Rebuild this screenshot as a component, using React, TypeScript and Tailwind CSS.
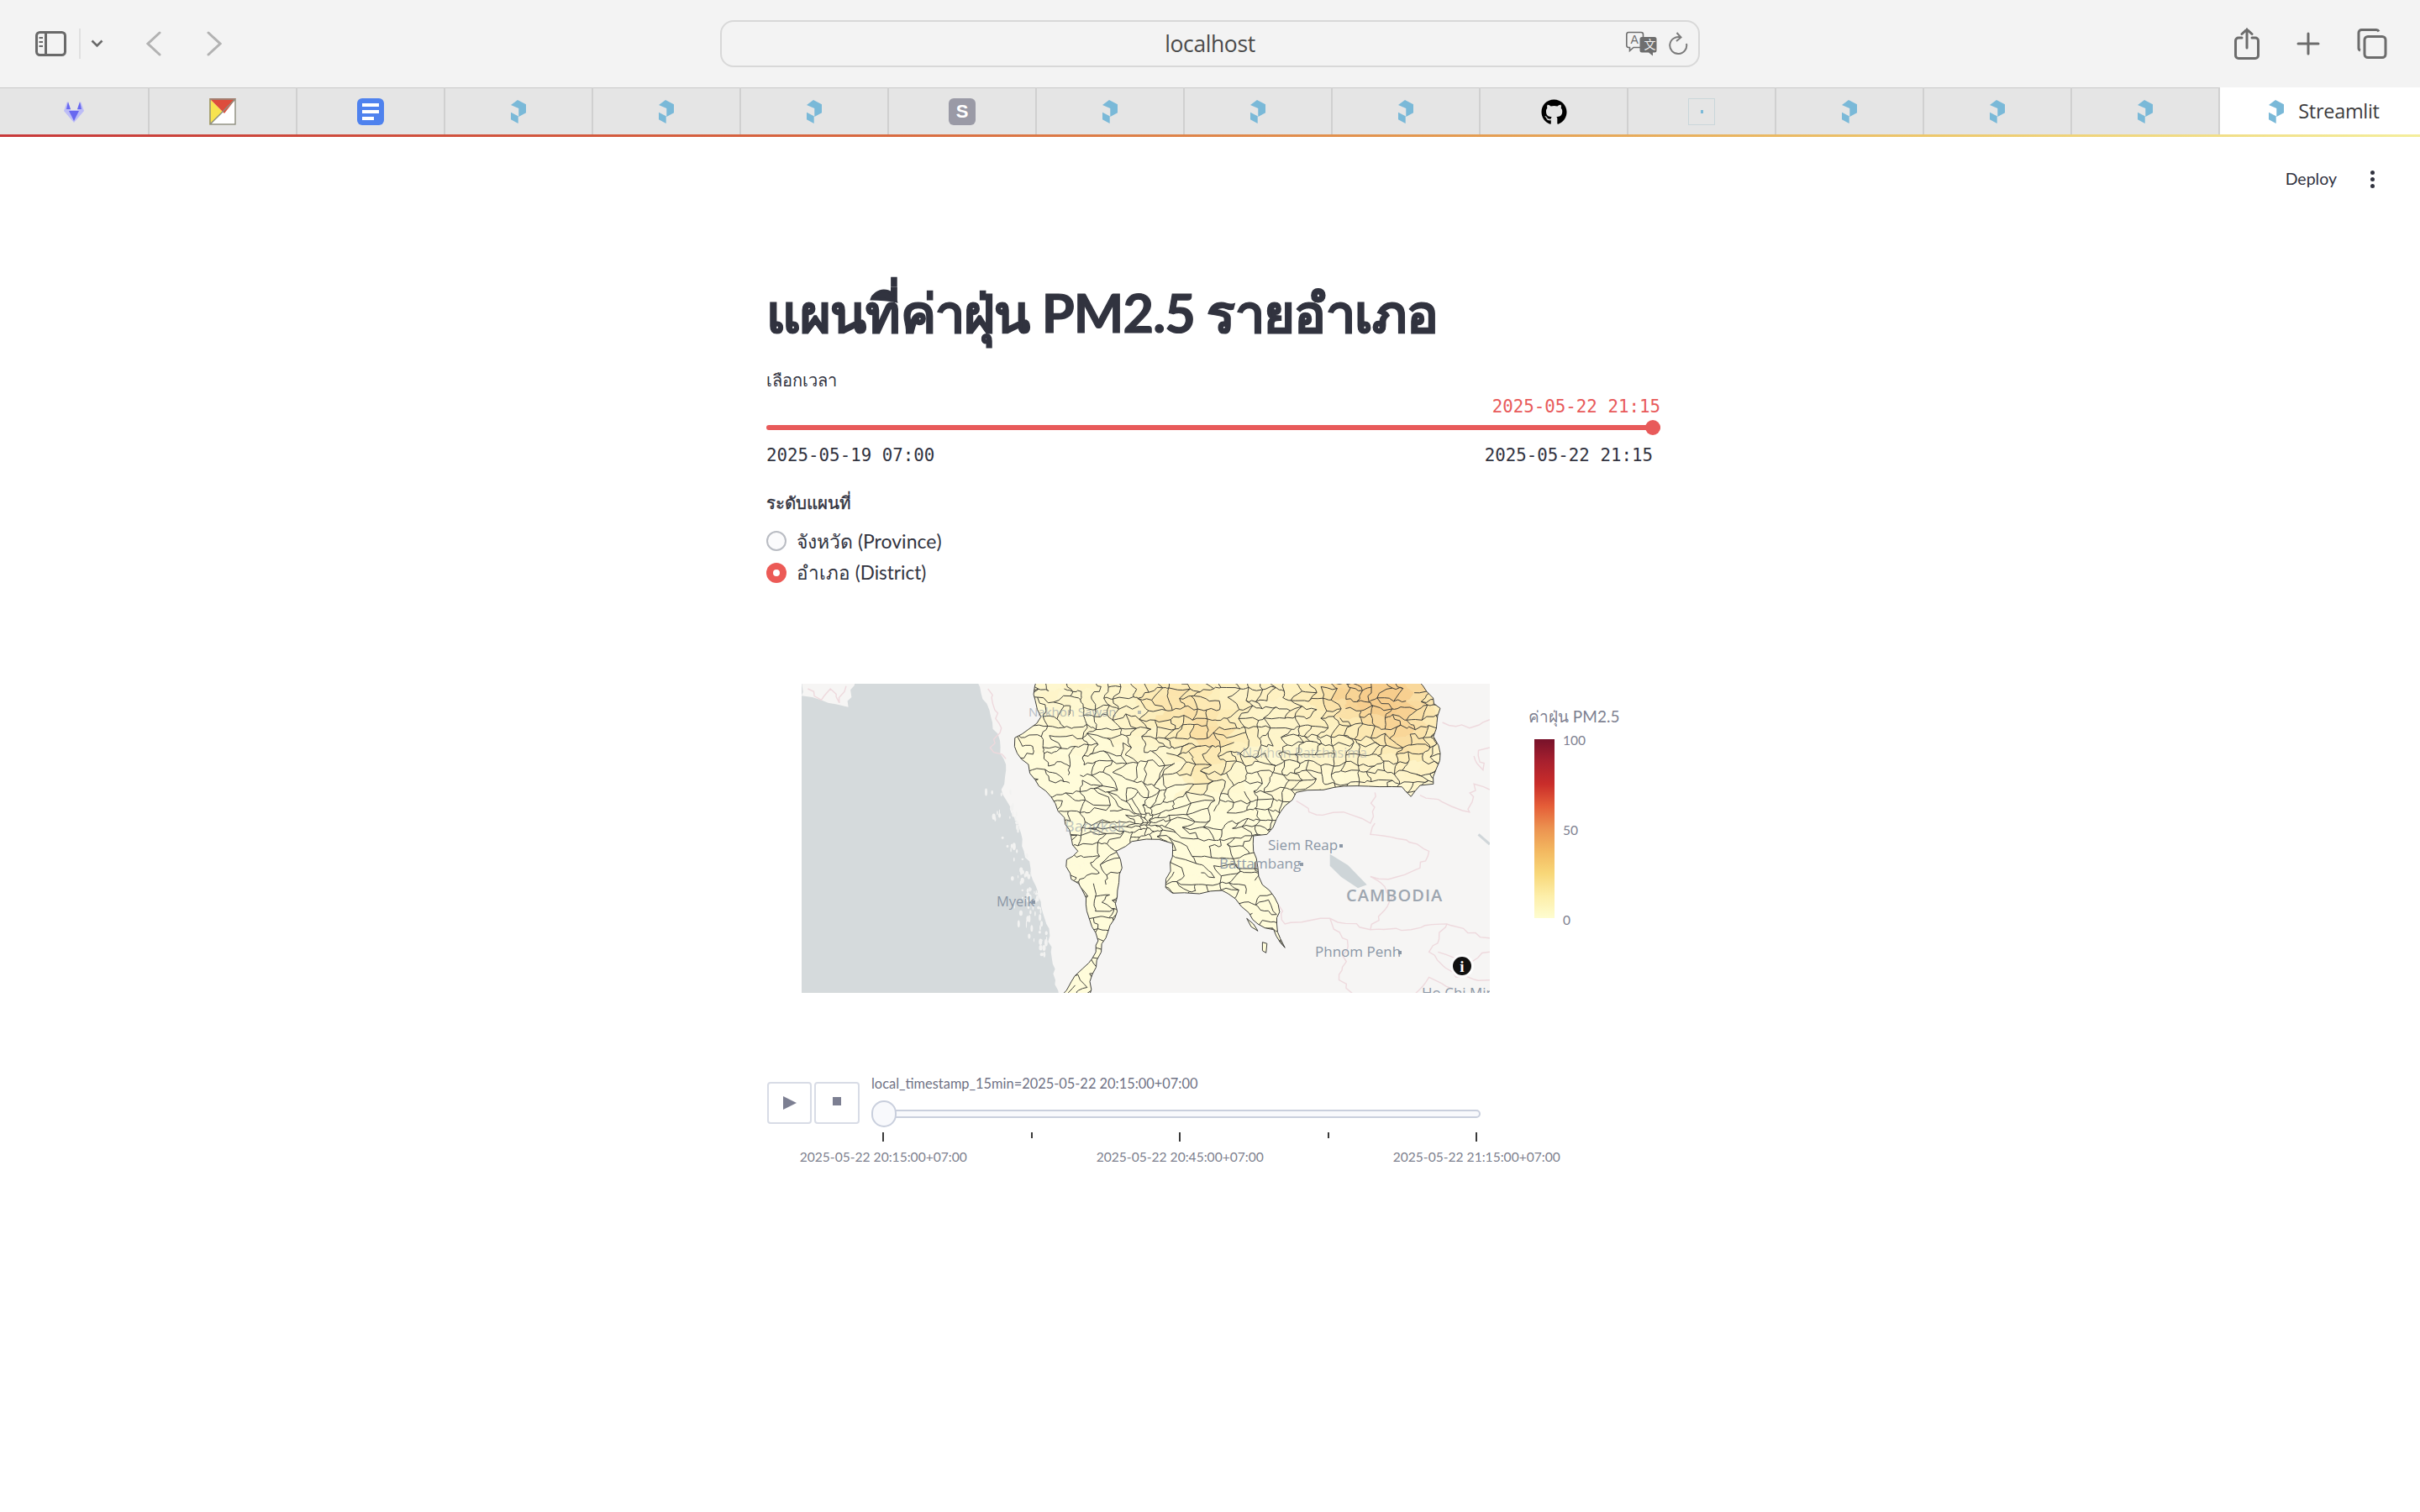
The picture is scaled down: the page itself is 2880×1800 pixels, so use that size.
import { FaGithub } from 'react-icons/fa';

// points traced off the map crop, kept in crop units (x/1.867, y/3 gets map pixels)
type Pt = [number, number];
const toMap = ([x, y]: Pt): Pt => [x / 1.867 - 14, y / 3 - 14];
const str = (list: Pt[]) => list.map(([x, y]) => `${x.toFixed(1)},${y.toFixed(1)}`).join(' ');
const pts = (list: Pt[]) => str(list.map(toMap));

function seeded(seed: number) {
  let s = seed;
  return () => {
    s = (s * 16807) % 2147483647;
    return s / 2147483647;
  };
}

const lerp = (a: number, b: number, t: number) => a + (b - a) * t;

// breaks long segments up so borders look hand-surveyed rather than straight
function wiggle(list: Pt[], seed: number, step: number, amp: number, closed = false): Pt[] {
  const rnd = seeded(seed);
  const out: Pt[] = [];
  const count = closed ? list.length : list.length - 1;
  for (let i = 0; i < count; i++) {
    const a = list[i];
    const b = list[(i + 1) % list.length];
    const n = Math.max(1, Math.round(Math.hypot(a[0] - b[0], a[1] - b[1]) / step));
    for (let k = 0; k < n; k++) {
      const t = k / n;
      const m = k === 0 ? 0 : amp;
      out.push([lerp(a[0], b[0], t) + (rnd() - 0.5) * m, lerp(a[1], b[1], t) + (rnd() - 0.5) * m]);
    }
  }
  if (!closed) out.push(list[list.length - 1]);
  return out;
}

const THAILAND: Pt[] = wiggle(
  [
    [548, 30], [545, 100], [558, 160], [530, 205], [500, 235], [505, 290], [530, 330], [545, 385], [590, 470],
    [610, 520], [625, 590], [640, 640], [615, 670], [625, 740], [650, 780], [665, 880], [685, 960], [680, 1000],
    [650, 1060], [600, 1160], [665, 1160], [672, 1080], [692, 1000], [702, 950], [722, 880], [728, 780], [738, 700],
    [725, 640], [760, 605], [820, 598], [850, 612], [845, 680], [835, 770], [850, 790], [910, 792], [960, 780],
    [990, 810], [1020, 860], [1040, 900], [1075, 920], [1100, 985], [1082, 900], [1085, 830], [1050, 760], [1040, 700],
    [1030, 640], [1030, 585], [1060, 580], [1090, 500], [1125, 430], [1210, 412], [1360, 410], [1380, 445], [1400, 405],
    [1430, 400], [1445, 290], [1430, 230], [1445, 130], [1415, 70], [1395, 30],
  ],
  77,
  26,
  9,
  true,
);
const LAND_EAST: Pt[] = wiggle(
  [
    [415, 30], [450, 180], [480, 330], [470, 420], [510, 560], [520, 640], [550, 780], [570, 900], [580, 1000],
    [590, 1100], [598, 1160], [1130, 1160], [1120, 1060], [1100, 985], [1040, 900], [990, 810], [960, 780], [850, 790],
    [835, 770], [850, 612], [760, 605], [725, 640], [738, 700], [728, 780], [722, 880], [692, 1000], [672, 1080], [665, 1160],
    [1130, 1160], [1570, 1160], [1570, 30],
  ],
  91,
  22,
  8,
  true,
);
const BORDERS: Pt[][] = [
  [[1125, 460], [1170, 510], [1230, 500], [1290, 540], [1300, 430]],
  [[1300, 540], [1290, 580], [1370, 600], [1420, 640], [1400, 700], [1330, 740], [1290, 730]],
  [[1400, 440], [1470, 480], [1510, 500], [1520, 400], [1555, 420]],
  [[1085, 830], [1100, 900], [1200, 880], [1290, 920], [1380, 920], [1460, 900], [1555, 950]],
  [[1440, 1000], [1500, 1040], [1555, 1000]],
  [[1450, 180], [1510, 200], [1555, 170]],
  [[1520, 300], [1540, 350], [1530, 280], [1555, 270]],
  [[440, 60], [470, 200], [445, 270], [480, 310]],
  [[40, 60], [70, 100], [90, 60], [110, 110], [125, 50]],
  [[1390, 1148], [1420, 1090], [1470, 1130]],
  [[1200, 880], [1240, 980], [1220, 1100], [1250, 1148]],
  [[1290, 730], [1340, 800], [1290, 920]],
  [[1460, 900], [1420, 1000], [1480, 1090], [1555, 1100]],
];

// the little white specks of the Myeik archipelago, off the west coast
function buildSpecks() {
  const rnd = seeded(1907);
  const specks: { x: number; y: number; w: number; h: number }[] = [];
  for (let i = 0; i < 90; i++) {
    const y = 420 + rnd() * 600;
    const coast = 490 + ((y - 420) / 600) * 95;
    const [mx, my] = toMap([coast - rnd() * rnd() * 70, y]);
    specks.push({ x: mx, y: my, w: 0.5 + rnd() * 1.6, h: 1 + rnd() * 3.5 });
  }
  return specks;
}
const SPECKS = buildSpecks();

function heat(t: number) {
  const low = [255, 252, 218];
  const mid = [253, 236, 182];
  const high = [247, 205, 140];
  const [a, b, k] = t < 0.5 ? [low, mid, t * 2] : [mid, high, (t - 0.5) * 2];
  return `rgb(${(a as number[]).map((v, i) => Math.round(lerp(v, (b as number[])[i], k as number))).join(',')})`;
}

// where the dust is worst: [x, y, radius, strength] in map pixels
const HOTSPOTS = [
  [698, 18, 45, 0.7],
  [640, 10, 35, 0.35],
  [490, 63, 36, 0.5],
  [440, 25, 40, 0.4],
  [473, 109, 22, 0.35],
  [720, 70, 30, 0.3],
];

function dust(x: number, y: number) {
  let t = ((x - 290) / 430) * 0.22 + ((90 - y) / 110) * 0.24;
  for (const [hx, hy, r, k] of HOTSPOTS) {
    const d = Math.hypot(x - hx, y - hy) / r;
    t += k * Math.exp(-d * d);
  }
  return t;
}

// fake district mesh, squeezed towards Bangkok; some edges are dropped so cells merge unevenly
function buildDistricts() {
  const rnd = seeded(4211);
  const bkk: Pt = [412, 168];
  const cw = 15;
  const ch = 11;
  const cols = 62;
  const rows = 46;
  const grid: Pt[][] = [];
  for (let i = 0; i <= cols; i++) {
    grid[i] = [];
    for (let j = 0; j <= rows; j++) {
      const x = -60 + i * cw + (rnd() - 0.5) * cw * 0.75 + (j % 2) * (cw / 2);
      const y = -70 + j * ch + (rnd() - 0.5) * ch * 0.75;
      const dx = x - bkk[0];
      const dy = y - bkk[1];
      const d = Math.hypot(dx, dy) || 1;
      const f = Math.min(1, 0.2 + Math.pow(d / 90, 1.2));
      grid[i][j] = [bkk[0] + dx * f, bkk[1] + dy * f];
    }
  }
  const wob = (a: Pt, b: Pt): Pt[] => {
    const size = Math.hypot(a[0] - b[0], a[1] - b[1]) * 0.28;
    return [
      [lerp(a[0], b[0], 0.35) + (rnd() - 0.5) * size, lerp(a[1], b[1], 0.35) + (rnd() - 0.5) * size],
      [lerp(a[0], b[0], 0.7) + (rnd() - 0.5) * size, lerp(a[1], b[1], 0.7) + (rnd() - 0.5) * size],
    ];
  };
  // west and south have bigger districts than the north-east
  const dropRate = (p: Pt) => (p[0] < 330 || p[1] > 190 ? 0.42 : 0.2);
  const hEdge: Pt[][][] = [];
  const vEdge: Pt[][][] = [];
  const lines: string[] = [];
  for (let i = 0; i <= cols; i++) {
    hEdge[i] = [];
    vEdge[i] = [];
    for (let j = 0; j <= rows; j++) {
      if (i < cols) {
        hEdge[i][j] = wob(grid[i][j], grid[i + 1][j]);
        if (rnd() > dropRate(grid[i][j])) lines.push(str([grid[i][j], ...hEdge[i][j], grid[i + 1][j]]));
      }
      if (j < rows) {
        vEdge[i][j] = wob(grid[i][j], grid[i][j + 1]);
        if (rnd() > dropRate(grid[i][j])) lines.push(str([grid[i][j], ...vEdge[i][j], grid[i][j + 1]]));
      }
    }
  }
  const cells: { points: string; fill: string }[] = [];
  for (let i = 0; i < cols; i++) {
    for (let j = 0; j < rows; j++) {
      const poly: Pt[] = [
        grid[i][j], ...hEdge[i][j],
        grid[i + 1][j], ...vEdge[i + 1][j],
        grid[i + 1][j + 1], ...[...hEdge[i][j + 1]].reverse(),
        grid[i][j + 1], ...[...vEdge[i][j]].reverse(),
      ];
      const cx = (grid[i][j][0] + grid[i + 1][j + 1][0]) / 2;
      const cy = (grid[i][j][1] + grid[i + 1][j + 1][1]) / 2;
      const t = dust(cx, cy) + (rnd() - 0.5) * 0.12;
      cells.push({ points: str(poly), fill: heat(Math.max(0, Math.min(1, t))) });
    }
  }
  return { cells, lines };
}
const DISTRICTS = buildDistricts();

const MAP_LABELS = [
  { text: 'Nakhon Sawan', x: 270, y: 39, size: 15, op: 0.6, dot: 130 },
  { text: 'Nakhon Ratchasima', x: 524, y: 88, size: 16, op: 0.45, dot: -6 },
  { text: 'Bangkok', x: 313, y: 176, size: 18, op: 0.55, dot: 0 },
  { text: 'Siem Reap', x: 555, y: 198, size: 17, op: 1, dot: 85 },
  { text: 'Battambang', x: 497, y: 220, size: 17, op: 0.95, dot: 96 },
  { text: 'Myeik', x: 232, y: 265, size: 16.500, op: 1, dot: 42 },
  { text: 'Phnom Penh', x: 611, y: 325, size: 17, op: 1, dot: 99 },
  { text: 'Ho Chi Minh', x: 738, y: 374, size: 17, op: 1, dot: 0 },
];

function ThaiMap() {
  return (
    <svg width="819" height="368" viewBox="0 0 819 368" className="block bg-[#d5dadc]">
      <defs>
        <clipPath id="thailand">
          <polygon points={pts(THAILAND)} />
        </clipPath>
      </defs>
      <polygon points={pts(LAND_EAST)} fill="#f6f5f4" />
      <polygon points={pts(wiggle([[26, 30], [145, 30], [130, 125], [85, 110], [26, 85]], 12, 20, 10, true))} fill="#f6f5f4" />
      {SPECKS.map((s, i) => (
        <ellipse key={i} cx={s.x} cy={s.y} rx={s.w} ry={s.h} fill="#f2f2f1" />
      ))}
      <polygon points={pts([[1200, 650], [1240, 690], [1282, 760], [1262, 772], [1225, 732], [1200, 692]])} fill="#ced5d8" />
      <polyline points={pts([[1530, 580], [1555, 615]])} fill="none" stroke="#d0d6d9" strokeWidth="3" />
      {BORDERS.map((b, i) => (
        <polyline key={i} points={pts(wiggle(b, 300 + i, 18, 14))} fill="none" stroke="#eed9dd" strokeWidth="1.4" />
      ))}
      <g clipPath="url(#thailand)">
        {DISTRICTS.cells.map((c, i) => (
          <polygon key={i} points={c.points} fill={c.fill} stroke={c.fill} strokeWidth="0.6" />
        ))}
        {DISTRICTS.lines.map((l, i) => (
          <polyline key={i} points={l} fill="none" stroke="#3f3f3c" strokeWidth="1" />
        ))}
      </g>
      <polygon points={pts(THAILAND)} fill="none" stroke="#3f3f3c" strokeWidth="1" />
      <polygon points={pts([[1015, 880], [1030, 900], [1040, 925], [1025, 910]])} fill="#fffcda" stroke="#3f3f3c" />
      <polygon points={pts([[1050, 965], [1060, 970], [1058, 1003], [1050, 995]])} fill="#fffcda" stroke="#3f3f3c" />
      {MAP_LABELS.map((l) => (
        <g key={l.text} opacity={l.op} fill="#8b97a6">
          <text x={l.x} y={l.y} fontSize={l.size} fontWeight="500" fontFamily="'Open Sans', sans-serif">
            {l.text}
          </text>
          {l.dot ? <rect x={l.x + l.dot} y={l.y - 7} width="4" height="4" /> : null}
        </g>
      ))}
      <text x="648" y="259" fontSize="20" letterSpacing="1" fill="#9da6b0" fontWeight="600" fontFamily="'Open Sans', sans-serif">
        CAMBODIA
      </text>
    </svg>
  );
}

function StreamlitFav() {
  return (
    <svg width="32" height="32" viewBox="0 0 32 32">
      <polygon points="7,8 15,2 25,7.3 25,17.3 16.3,22 16.3,12" fill="#7ab9d8" />
      <polygon points="7,16.7 15.7,21.3 15.7,30 7,25.3" fill="#7ab9d8" />
    </svg>
  );
}

function Favicon({ kind }: { kind: string }) {
  if (kind === 'st') return <StreamlitFav />;
  if (kind === 'fox')
    return (
      <svg width="32" height="32" viewBox="0 0 32 32">
        <polygon points="4,15 8,4 12,14 20,14 24,4 28,15 16,29" fill="#bcbcf6" />
        <polygon points="7,13 9,4 12,13" fill="#6767f0" />
        <polygon points="20,13 23,4 25,13" fill="#6767f0" />
        <polygon points="10,15 22,15 16,27" fill="#6767f0" />
      </svg>
    );
  if (kind === 'gmail')
    return (
      <svg width="32" height="32" viewBox="0 0 32 32">
        <rect width="32" height="32" fill="#fff" />
        <polygon points="0,0 0,32 16,16" fill="#f7e34f" />
        <polygon points="0,0 32,0 16,16 " fill="#dd4d3c" />
        <polygon points="16,16 32,0 18,18" fill="#dd4d3c" />
        <path d="M1 1H31V31H1Z M1 31L31 1" fill="none" stroke="#8f8f80" strokeWidth="1.5" />
      </svg>
    );
  if (kind === 'docs')
    return (
      <div className="w-8 h-8 rounded-md bg-[#4f82ee] flex flex-col justify-center items-start gap-[4px] pl-[6px]">
        <div className="w-5 h-1 bg-white" />
        <div className="w-5 h-1 bg-white" />
        <div className="w-[14px] h-1 bg-white" />
      </div>
    );
  if (kind === 's')
    return (
      <div className="w-8 h-8 rounded-md bg-[#9a9aa6] flex items-center justify-center text-white font-bold text-[22px] leading-none font-['Liberation_Sans',sans-serif]">
        S
      </div>
    );
  if (kind === 'github') return <FaGithub size={31} color="#000" />;
  return (
    <div className="w-8 h-8 border border-[#c9d6da] flex items-center justify-center">
      <div className="w-[3px] h-1 bg-[#7ab9d8]" />
    </div>
  );
}

const TABS = ['fox', 'gmail', 'docs', 'st', 'st', 'st', 's', 'st', 'st', 'st', 'github', 'blank', 'st', 'st', 'st'];

function Toolbar() {
  return (
    <div className="h-[104px] bg-[#f3f3f3] flex items-center pl-[42px]">
      <svg width="37" height="30" viewBox="0 0 37 30" fill="none" stroke="#696969" strokeWidth="3">
        <rect x="1.5" y="1.5" width="34" height="27" rx="4" />
        <path d="M12.5 2V28" />
        <path d="M4.5 8H9M4.5 13H9M4.5 18H9" strokeWidth="2" />
      </svg>
      <div className="ml-[15px] w-[2px] h-9 bg-[#e0e0e0]" />
      <svg className="ml-[12px]" width="15" height="10" viewBox="0 0 15 10" fill="none" stroke="#696969" strokeWidth="2.6">
        <path d="M1.5 1.5L7.5 7.5L13.5 1.5" />
      </svg>
      <svg className="ml-[51px]" width="18" height="30" viewBox="0 0 18 30" fill="none" stroke="#b2b2b2" strokeWidth="3" strokeLinecap="round">
        <path d="M16 2L2 15L16 28" />
      </svg>
      <svg className="ml-[54px]" width="18" height="30" viewBox="0 0 18 30" fill="none" stroke="#b2b2b2" strokeWidth="3" strokeLinecap="round">
        <path d="M2 2L16 15L2 28" />
      </svg>
      <div className="ml-[593px] w-[1166px] h-[56px] border-2 border-[#d8d8d8] rounded-[16px] grid grid-cols-[1fr_auto_1fr] items-center">
        <div />
        <div className="text-[#4b4b4b] text-[26.500px] leading-none font-['Open_Sans',sans-serif] tracking-[-0.4px]">localhost</div>
        <div className="flex justify-end items-center gap-[13px] pr-[12px]">
          <svg width="37" height="30" viewBox="0 0 37 30">
            <path d="M3 1.5H18a2.5 2.5 0 0 1 2.5 2.5V17a2.5 2.5 0 0 1-2.5 2.5H9L4.5 23.5V19.5H3A2.5 2.5 0 0 1 .8 17V4A2.5 2.5 0 0 1 3 1.5Z" fill="#f3f3f3" stroke="#6e6e6e" strokeWidth="1.6" />
            <text x="5.5" y="15" fontSize="14" fill="#6e6e6e" fontFamily="'Liberation Sans', sans-serif">A</text>
            <path d="M19 7H34a2.5 2.5 0 0 1 2.5 2.5V23a2.5 2.5 0 0 1-2.5 2.5H32V29.5L27 25.5H19A2.5 2.5 0 0 1 16.5 23V9.5A2.5 2.5 0 0 1 19 7Z" fill="#6e6e6e" />
            <text x="21.5" y="21" fontSize="14" fill="#f3f3f3" fontFamily="'Noto Sans CJK SC', sans-serif">文</text>
          </svg>
          <svg width="24" height="28" viewBox="0 0 24 28" fill="none" stroke="#7b7b7b" strokeWidth="2">
            <path d="M15 6.5A10 10 0 1 0 22 14" />
            <path d="M10.5 1L15.5 6.5L10 11" />
          </svg>
        </div>
      </div>
      <svg className="ml-[636px]" width="30" height="38" viewBox="0 0 30 38" fill="none" stroke="#6c6c6c" strokeWidth="3" strokeLinecap="round">
        <path d="M9 12H5a3.500 3.500 0 0 0-3.500 3.500V33A3.500 3.500 0 0 0 5 36.500H25a3.500 3.500 0 0 0 3.500-3.500V15.500A3.500 3.500 0 0 0 25 12H21" />
        <path d="M15 24V2M9 7.500L15 2L21 7.500" />
      </svg>
      <svg className="ml-[44px]" width="28" height="28" viewBox="0 0 28 28" fill="none" stroke="#6c6c6c" strokeWidth="3" strokeLinecap="round">
        <path d="M14 2V26M2 14H26" />
      </svg>
      <svg className="ml-[44px]" width="36" height="36" viewBox="0 0 36 36" fill="none" stroke="#6c6c6c" strokeWidth="3">
        <path d="M4 26a3 3 0 0 1-2-3V5a3.500 3.500 0 0 1 3.500-3.500H23A3.500 3.500 0 0 1 26 3.500" />
        <rect x="9" y="9.500" width="25" height="25" rx="4" />
      </svg>
    </div>
  );
}

function TabStrip() {
  return (
    <>
      <div className="h-[56px] flex bg-[#e5e5e5] shadow-[inset_0_2px_1px_-1px_#c9c9c9]">
        {TABS.map((t, i) => (
          <div key={i} className="w-[176px] first:w-[178px] border-r-2 border-[#d0d0d0] flex items-center justify-center pt-[2px]">
            <Favicon kind={t} />
          </div>
        ))}
        <div className="flex-1 bg-white flex items-center justify-center gap-[10px] pt-[2px] pl-[3px]">
          <StreamlitFav />
          <span className="text-[23.500px] text-[#3d3d3d] leading-none font-['Open_Sans',sans-serif] tracking-[-0.3px]">Streamlit</span>
        </div>
      </div>
      <div className="h-[3px] bg-[linear-gradient(90deg,#c8393a_0%,#d8673f_35%,#e49a50_60%,#edc86c_80%,#f4ee9c_100%)]" />
    </>
  );
}

function PlotSlider() {
  const cells = ['2025-05-22 20:15:00+07:00', '', '2025-05-22 20:45:00+07:00', '', '2025-05-22 21:15:00+07:00'];
  return (
    <div className="mt-[96px] flex">
      <div className="flex mt-[10px] gap-[3px] h-[50px] ml-px">
        <button className="w-[53px] border-2 border-[#d8dce6] rounded-[4px] flex items-center justify-center">
          <svg width="16" height="16" viewBox="0 0 16 16"><polygon points="0,0 16,8 0,16" fill="#7c7f92" /></svg>
        </button>
        <button className="w-[54px] border-2 border-[#d8dce6] rounded-[4px] flex items-center justify-center pb-[4px]">
          <div className="w-[10px] h-[10px] bg-[#7c7f92]" />
        </button>
      </div>
      <div className="ml-[14px] w-[725px]">
        <div className="h-6 leading-6 text-[16.400px] text-[#6f7285] whitespace-nowrap">local_timestamp_15min=2025-05-22 20:15:00+07:00</div>
        <div className="relative mt-[8px] h-8 flex items-center">
          <div className="w-full h-[10px] rounded-full bg-[#f8f9fc] border-2 border-[#c9cfdd]" />
          <div className="absolute left-0 top-0 w-[30px] h-8 rounded-full bg-[#f8f9fc] border-2 border-[#c9cfdd]" />
        </div>
        <div className="mt-[6px] -ml-[74px] grid grid-cols-[repeat(5,176.5px)]">
          {cells.map((c, i) => (
            <div key={i} className="flex flex-col items-center">
              <div className={c ? 'w-[2px] h-[11px] bg-[#3a3a3a]' : 'w-[2px] h-[7px] bg-[#3a3a3a]'} />
              {c ? (
                <div className="mt-[8px] h-5 leading-5 text-[15.600px] text-[#7d7f8e] whitespace-nowrap">{c}</div>
              ) : null}
            </div>
          ))}
        </div>
      </div>
    </div>
  );
}

export default function App() {
  return (
    <div className="w-[2880px] h-[1800px] bg-white overflow-hidden text-[#31333f] font-['Lato','Noto_Sans',sans-serif]">
      <Toolbar />
      <TabStrip />
      <div className="h-[100px] flex justify-end items-center pr-[54px]">
        <span className="text-[19.500px] mr-[4px]">Deploy</span>
        <div className="ml-[36px] flex flex-col gap-[3px]">
          <div className="w-[5px] h-[5px] rounded-full bg-[#31333f]" />
          <div className="w-[5px] h-[5px] rounded-full bg-[#31333f]" />
          <div className="w-[5px] h-[5px] rounded-full bg-[#31333f]" />
        </div>
      </div>
      <div className="ml-[912px] w-[1064px]">
        <h1 className="mt-[59px] h-[100px] leading-[100px] text-[63px] font-bold whitespace-nowrap tracking-[-0.85px] [-webkit-text-stroke:1.2px_#31333f]">แผนที่ค่าฝุ่น PM2.5 รายอำเภอ</h1>
        <div className="mt-[10px] h-10 leading-10 text-[20px]">เลือกเวลา</div>
        <div className="h-5 leading-5 mt-[2px] text-right text-[20.800px] text-[#e85a5a] font-['DejaVu_Sans_Mono',monospace]">2025-05-22 21:15</div>
        <div className="relative mt-[6px] h-[18px] flex items-center">
          <div className="w-full h-[6px] rounded-full bg-[#e85a5a]" />
          <div className="absolute right-0 top-0 w-[18px] h-[18px] rounded-full bg-[#e85a5a]" />
        </div>
        <div className="mt-[13px] h-[22px] leading-[22px] pr-[9px] flex justify-between text-[20.800px] font-['DejaVu_Sans_Mono',monospace]">
          <span>2025-05-19 07:00</span>
          <span>2025-05-22 21:15</span>
        </div>
        <div className="mt-[30px] h-[30px] leading-[30px] text-[20.500px] [-webkit-text-stroke:0.4px_#31333f]">ระดับแผนที่</div>
        <div className="mt-[19px] h-6 flex items-center gap-3">
          <div className="w-6 h-6 rounded-full border-2 border-[#b9bcc3] bg-[#fbfbfc]" />
          <span className="text-[23px]">จังหวัด (Province)</span>
        </div>
        <div className="mt-[14px] h-6 flex items-center gap-3">
          <div className="w-6 h-6 rounded-full bg-[#ec5a56] flex items-center justify-center">
            <div className="w-2 h-2 rounded-full bg-white" />
          </div>
          <span className="text-[22.500px]">อำเภอ (District)</span>
        </div>
        <div className="mt-[120px] ml-[42px] flex">
          <div className="relative w-[819px] h-[368px] overflow-hidden">
            <ThaiMap />
            <div className="absolute left-[772px] top-[322px] w-7 h-7 rounded-full bg-white/80 flex items-center justify-center">
              <div className="w-[22px] h-[22px] rounded-full bg-[#111] text-white flex items-center justify-center text-[19px] font-bold leading-none font-['Liberation_Serif',serif]">i</div>
            </div>
          </div>
          <div className="ml-[46px]">
            <div className="mt-[27px] h-6 leading-6 text-[19px] text-[#7d7f90] whitespace-nowrap">ค่าฝุ่น PM2.5</div>
            <div className="mt-[6px] flex items-start ml-[7px]">
              <div className="mt-[9px] w-6 h-[213px] bg-[linear-gradient(0deg,#fefdd0_0%,#fdeea8_12.500%,#f8d778_25%,#f3b860_37.500%,#ec9350_50%,#e55e38_62.500%,#c92d2a_75%,#a8202e_87.500%,#77122a_100%)]" />
              <div className="ml-[10px] h-[234px] flex flex-col justify-between text-[15.500px] leading-5 text-[#7d7f90]">
                <span>100</span>
                <span>50</span>
                <span>0</span>
              </div>
            </div>
          </div>
        </div>
        <PlotSlider />
      </div>
    </div>
  );
}
